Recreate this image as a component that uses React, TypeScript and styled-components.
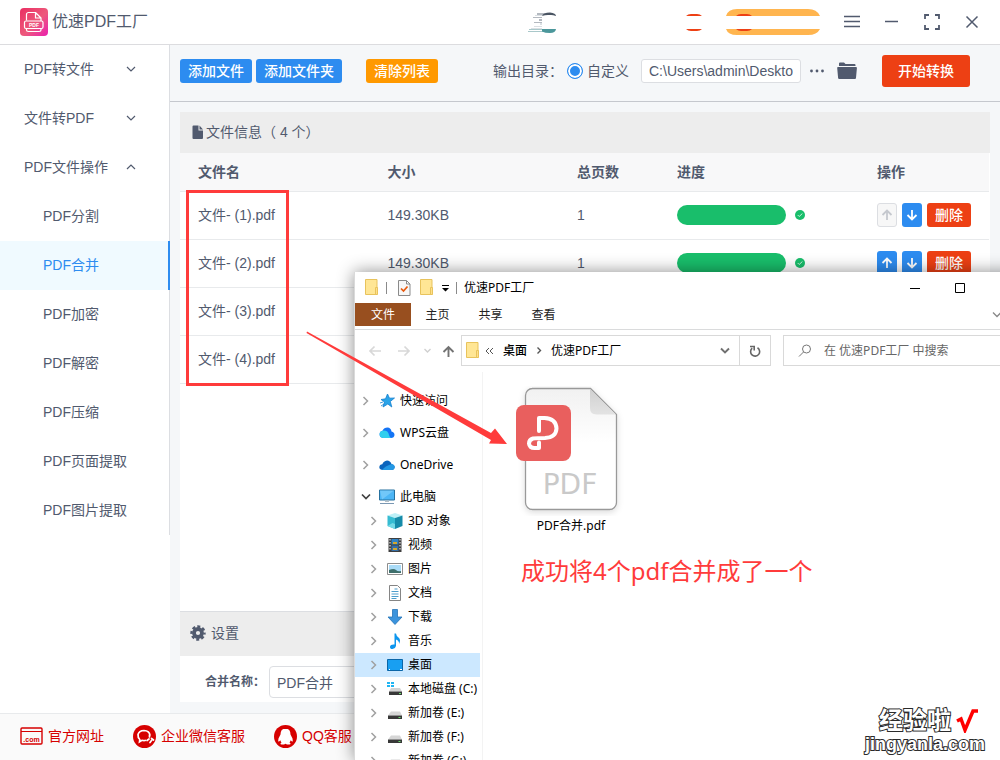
import React from 'react';
import styled, { createGlobalStyle, css } from 'styled-components';

const ink = '#515a6e';
const blue = '#2d8cf0';
const red = '#ed4014';
const line = '#e8eaec';
const mark = '#ff3b3b';
const uiFont = '"Liberation Sans", "Noto Sans CJK SC", sans-serif';
const shellFont = '"Noto Sans", "Noto Sans CJK SC", sans-serif';

const GlobalStyle = createGlobalStyle`
  *, *::before, *::after { box-sizing: border-box; }
  body { margin: 0; background: #fff; color: ${ink}; font: 14px/20px ${uiFont}; }
  button, input { font: inherit; color: inherit; margin: 0; padding: 0; border: 0; background: none; }
  button { cursor: pointer; white-space: nowrap; }
  a { color: inherit; text-decoration: none; }
  ul { list-style: none; margin: 0; padding: 0; }
  svg { display: block; flex: none; }
`;

/* ---------- converter window ---------- */

const Page = styled.div`
  position: relative;
  display: flex;
  flex-direction: column;
  min-height: 100vh;
  overflow: hidden;
`;

const Header = styled.header`
  display: flex;
  align-items: center;
  height: 45px;
  padding: 0 20px;
  border-bottom: 1px solid #dcdcdf;
  background: #fff;
`;

const Brand = styled.h1`
  display: flex;
  align-items: center;
  gap: 4px;
  margin: 0 auto 0 0;
  font-size: 16px;
  line-height: 24px;
  font-weight: 400;
`;

const Promo = styled.div`
  display: flex;
  align-items: center;
  margin-right: 24px;
`;

const WindowButtons = styled.div`
  display: flex;
  align-items: center;
  gap: 24px;
`;

const IconButton = styled.button`
  display: flex;
  align-items: center;
  justify-content: center;
  min-width: 16px;
  height: 16px;
`;

const Body = styled.div`
  display: flex;
  flex: 1;
`;

const Sidebar = styled.nav`
  width: 170px;
  flex: none;
`;

const Menu = styled.ul`
  border-right: 1px solid #dcdee2;
`;

const MenuItem = styled.a<{ $level?: number; $active?: boolean }>`
  display: flex;
  align-items: center;
  justify-content: space-between;
  height: 49px;
  padding: 0 33px 2px ${p => (p.$level === 2 ? 43 : 24)}px;
  ${p => p.$active && css`
    margin-right: -1px;
    color: ${blue};
    background: #f0faff;
    border-right: 2px solid ${blue};
  `}
`;

const Main = styled.main`
  display: flex;
  flex: 1;
  flex-direction: column;
  min-width: 0;
  background: #f5f7f9;
`;

const Toolbar = styled.div`
  display: flex;
  align-items: center;
  height: 57px;
  padding: 0 30px 4px 10px;
  border-bottom: 1px solid #c5c8ce;
`;

const ButtonGroup = styled.div<{ $gap: number }>`
  display: flex;
  align-items: center;
  gap: ${p => p.$gap}px;
`;

const PathTools = styled(ButtonGroup)`
  margin: 0 25px 0 8px;
`;

const tones = { primary: blue, warning: '#ff9900', danger: red };

const Button = styled.button<{ $tone: keyof typeof tones; $large?: boolean }>`
  height: ${p => (p.$large ? 32 : 24)}px;
  padding: 0 ${p => (p.$large ? 16 : 8)}px;
  border-radius: 3px;
  color: #fff;
  font-weight: 500;
  background: ${p => tones[p.$tone]};
`;

const Output = styled.div`
  display: flex;
  align-items: center;
  margin-left: auto;
`;

const RadioLabel = styled.label`
  display: flex;
  align-items: center;
  gap: 4px;
  margin: 0 12px 0 4px;
`;

const Radio = styled.input`
  appearance: none;
  width: 16px;
  height: 16px;
  border: 1px solid ${blue};
  border-radius: 50%;
  background: ${blue};
  box-shadow: inset 0 0 0 2px #fff;
`;

const PathInput = styled.input`
  width: 160px;
  height: 24px;
  padding: 0 7px;
  border: 1px solid #dcdee2;
  border-radius: 3px;
  background: #fff;
`;

const Panel = styled.section`
  display: flex;
  flex: 1;
  flex-direction: column;
  margin: 10px 10px 11px;
  background: #fff;
`;

const PanelTitle = styled.h2<{ $section?: boolean }>`
  display: flex;
  align-items: center;
  height: ${p => (p.$section ? 45 : 41)}px;
  margin: 0;
  padding: 0 ${p => (p.$section ? 10 : 12)}px 2px;
  gap: ${p => (p.$section ? 5 : 2)}px;
  border-top: ${p => (p.$section ? '1px solid #dcdee2' : '0')};
  font-size: 14px;
  font-weight: 400;
  background: #ededed;
`;

const TableArea = styled.div`
  flex: 1;
  padding-right: 1px;
`;

const Table = styled.table`
  width: 100%;
  table-layout: fixed;
  border-collapse: collapse;
`;

const Th = styled.th<{ $width?: number }>`
  width: ${p => (p.$width ? `${p.$width}px` : 'auto')};
  height: 38px;
  padding: 0 0 0 18px;
  text-align: left;
  font-weight: 700;
  background: #f8f8f9;
  border-bottom: 1px solid ${line};
`;

const Td = styled.td`
  height: 48px;
  padding: 0 0 0 18px;
  border-bottom: 1px solid ${line};
`;

const Progress = styled.div`
  display: flex;
  align-items: center;
  gap: 9px;
`;

const Bar = styled.div`
  width: 109px;
  height: 20px;
  border-radius: 10px;
  background: #19be6b;
`;

const MoveButton = styled.button`
  display: flex;
  align-items: center;
  justify-content: center;
  width: 20px;
  height: 24px;
  border-radius: 3px;
  color: #fff;
  background: ${blue};
  &:disabled {
    color: #c5c8ce;
    background: #f7f7f7;
    border: 1px solid #dcdee2;
  }
`;

const Settings = styled.div`
  display: flex;
  align-items: center;
  gap: 8px;
  height: 46px;
  padding: 6px 25px 0;
`;

const SettingLabel = styled.label`
  font-size: 12px;
  font-weight: 700;
  width: 56px;
  white-space: nowrap;
`;

const NameInput = styled.input`
  width: 200px;
  height: 32px;
  padding: 0 7px;
  border: 1px solid #dcdee2;
  border-radius: 4px;
`;

const Footer = styled.footer`
  display: flex;
  align-items: center;
  gap: 29px;
  height: 47px;
  padding: 0 20px 2px;
  border-top: 1px solid ${line};
  background: #fafafa;
`;

const FooterLink = styled.a`
  display: flex;
  align-items: center;
  gap: 5px;
  color: #d60000;
`;

/* ---------- file explorer window ---------- */

const Explorer = styled.section`
  position: absolute;
  top: 272px;
  right: -27px;
  bottom: 0;
  left: 354px;
  display: flex;
  flex-direction: column;
  overflow: hidden;
  border-left: 1px solid #dadada;
  background: #fff;
  color: #000;
  font: 12px/16px ${shellFont};
  box-shadow: 0 0 16px rgba(0, 0, 0, 0.45);
`;

const TitleBar = styled.div`
  display: flex;
  align-items: center;
  height: 31px;
  padding-left: 10px;
`;

const QuickTools = styled.div`
  display: flex;
  align-items: center;
  flex: 1;
`;

const QuickIcons = styled.div`
  display: flex;
  align-items: center;
  gap: 9px;
`;

const QuickMenu = styled.button`
  display: flex;
  justify-content: center;
  width: 22px;
  padding-top: 2px;
`;

const Divider = styled.span<{ $before: number; $after: number }>`
  width: 1px;
  height: 12px;
  margin: 0 ${p => p.$after}px 0 ${p => p.$before}px;
  background: #8a8a8a;
`;

const CaptionButton = styled.button`
  display: flex;
  align-items: center;
  justify-content: center;
  width: 45px;
  height: 29px;
`;

const Ribbon = styled.div`
  display: flex;
  align-items: flex-start;
  height: 27px;
  padding-right: 25px;
  border-bottom: 1px solid #dadbdc;
`;

const RibbonTab = styled.button<{ $file?: boolean }>`
  width: ${p => (p.$file ? 56 : 53)}px;
  height: 23px;
  padding-top: 1px;
  color: ${p => (p.$file ? '#fff' : '#222')};
  background: ${p => (p.$file ? '#984f1f' : 'transparent')};
`;

const RibbonToggle = styled.button`
  margin: 7px 0 0 auto;
`;

const AddressRow = styled.div`
  display: flex;
  align-items: center;
  padding: 5px 0 0 13px;
`;

const History = styled.div`
  display: flex;
  align-items: center;
  width: 93px;
`;

const HistoryButton = styled.button<{ $gap: number }>`
  margin-right: ${p => p.$gap}px;
`;

const Address = styled.div`
  display: flex;
  align-items: center;
  flex: 1;
  height: 31px;
  padding-left: 4px;
  border: 1px solid #d9d9d9;
`;

const Overflow = styled.svg`
  margin-left: 5px;
`;

const Crumb = styled.button<{ $strong?: boolean }>`
  font-weight: ${p => (p.$strong ? 500 : 400)};
  margin: 0 9px;
`;

const AddressMenu = styled(IconButton)`
  margin: 0 6px 0 auto;
`;

const Refresh = styled.button`
  display: flex;
  align-items: center;
  justify-content: center;
  width: 31px;
  height: 29px;
  border-left: 1px solid #d9d9d9;
`;

const Search = styled.label`
  display: flex;
  align-items: center;
  gap: 12px;
  width: 244px;
  height: 31px;
  margin-left: 12px;
  padding-left: 14px;
  border: 1px solid #d9d9d9;
`;

const SearchInput = styled.input`
  flex: 1;
  min-width: 0;
  &::placeholder { color: #666; opacity: 1; }
`;

const Panes = styled.div`
  display: flex;
  flex: 1;
  min-height: 0;
  padding-top: 6px;
`;

const Tree = styled.ul`
  width: 128px;
  flex: none;
  padding: 17px 2px 0 0;
  border-right: 1px solid #f3f3f3;
`;

const TreeItem = styled.li<{ $child?: boolean; $selected?: boolean; $spaced?: boolean }>`
  display: flex;
  align-items: center;
  gap: ${p => (p.$child ? 10 : 8)}px;
  height: 24px;
  padding-left: ${p => (p.$child ? 14 : 6)}px;
  margin-bottom: ${p => (p.$spaced ? 8 : 0)}px;
  white-space: nowrap;
  background: ${p => (p.$selected ? '#cce8ff' : 'transparent')};
`;

const TreeLabel = styled.a`
  display: flex;
  align-items: center;
  gap: 5px;
`;

const Files = styled.div`
  flex: 1;
  padding: 14px 0 0 32px;
`;

const FileTile = styled.figure`
  display: flex;
  flex-direction: column;
  align-items: center;
  gap: 2px;
  width: 112px;
  margin: 0;
`;

const IconWord = styled.text`
  font: 28px "DejaVu Sans", sans-serif;
  fill: #c9c9c9;
`;

/* ---------- callouts drawn over the windows ---------- */

const NameFrame = styled.div`
  position: absolute;
  top: 190px;
  left: 186px;
  width: 103px;
  height: 196px;
  border: 3px solid ${mark};
  pointer-events: none;
`;

const Pointer = styled.svg`
  position: absolute;
  top: 330px;
  left: 304px;
  pointer-events: none;
`;

const Note = styled.p`
  position: absolute;
  top: 553px;
  left: 521px;
  margin: 0;
  color: ${mark};
  font: 24px/36px ${shellFont};
  white-space: nowrap;
`;

const Watermark = styled.div`
  position: absolute;
  right: 15px;
  bottom: 5px;
  display: flex;
  flex-direction: column;
  align-items: center;
  color: #fff;
  font: 700 18px/22px ${uiFont};
  -webkit-text-stroke: 2px #2b2b2b;
  paint-order: stroke fill;
`;

const WatermarkTop = styled.div`
  display: flex;
  align-items: center;
  gap: 5px;
  margin-left: 8px;
  font-size: 24px;
  line-height: 24px;
`;

/* ---------- drawings ---------- */

const Stroke = ({ d, w = 16, h = 16, color = 'currentColor', sw = 1.5 }: {
  d: string; w?: number; h?: number; color?: string; sw?: number;
}) => (
  <svg width={w} height={h} viewBox={`0 0 ${w} ${h}`} fill="none" stroke={color} strokeWidth={sw} aria-hidden="true">
    <path d={d} />
  </svg>
);

const Logo = () => (
  <svg width="28" height="28" viewBox="0 0 28 28" fill="none" aria-hidden="true">
    <defs>
      <linearGradient id="logo" x1="0" y1="0" x2="1" y2="1">
        <stop offset="0" stopColor="#ea2d62" /><stop offset=".55" stopColor="#ed5a7c" /><stop offset="1" stopColor="#ea1fb0" />
      </linearGradient>
    </defs>
    <rect width="28" height="28" rx="4" fill="url(#logo)" />
    <g stroke="#fff" strokeWidth="1.2" strokeLinejoin="round">
      <path d="M6.500 12.500V6.500a2 2 0 0 1 2-2h7l5.500 5.500v3M15.500 4.500v5.500H21" />
      <rect x="4.500" y="13" width="18.500" height="7.500" rx="1.500" />
      <path d="M6.500 20.500v1.500q0 1.500 2 1.500h10.500q2 0 2-1.500v-1.500" />
    </g>
    <text x="14" y="19" textAnchor="middle" fontFamily="Liberation Sans" fontWeight="700" fontSize="5" fill="#fff">PDF</text>
  </svg>
);

const PromoArt = () => (
  <svg width="292" height="28" viewBox="0 0 292 28" aria-hidden="true">
    <path d="M9 5h9v2H9zM5 9h9v1H5zM11 11h3v2h-3zM6 14h8v1H6z" fill="#b4b9c0" />
    <path d="M7 7h7v1H7zM12 15h2v2h-2zM6 18h8v1H6zM3 20h11v1H3z" fill="#dbe0e4" />
    <path d="M14 8q1-3.500 8-3.500 6 .5 6 3.500-4-1.500-6-1-4-.5-8 1z" fill="#4a5563" />
    <path d="M1 21h13v1H1zM0 23h16v1H0z" fill="#a9c8ca" />
    <path d="M14 21h14q-.5 4-6 4-5 0-8-1.500z" fill="#4b979b" />
    <path d="M158 8q2-2 5-2h6q3 0 5 2zM158 21h16q-2 2-5 2h-6q-3 0-5-2z" fill={red} />
    <path d="M198 8q2-7 11-7h71q9 0 12 7zM198 21h94q-3 6-12 6h-71q-9 0-11-6z" fill="#ffb54f" />
    <path d="M208 8q2-2 5-2h6q3 0 5 2zM208 21h16q-2 2-5 2h-6q-3 0-5-2z" fill={red} />
  </svg>
);

const OpenFolder = () => (
  <svg width="20" height="18" viewBox="0 0 20 18" fill={ink} aria-hidden="true">
    <path d="M2 4V1.500Q2 .5 3 .5h4l1.500 1.500h9q1 0 1 1V4zM1 5h18q1 0 .9 1l-.9 10q-.1 1-1 1H2.200q-1 0-1.100-1L.2 6Q.1 5 1 5z" />
  </svg>
);

const FileGlyph = () => (
  <svg width="12" height="14" viewBox="0 0 12 14" aria-hidden="true">
    <path d="M1.500.5h5v5h4.500V13q0 1-1 1H1.500q-1 0-1-1V1.500q0-1 1-1z" fill={ink} />
    <path d="M7.500.5 11 4.500H7.500z" fill={ink} />
  </svg>
);

const Gear = () => (
  <svg width="16" height="16" viewBox="0 0 16 16" fill="none" stroke={ink} aria-hidden="true">
    <circle cx="8" cy="8" r="4" strokeWidth="3.800" />
    <circle cx="8" cy="8" r="6.500" strokeWidth="2.400" strokeDasharray="3 2.105" strokeDashoffset="1.500" />
  </svg>
);

const Done = () => (
  <svg width="10" height="10" viewBox="0 0 10 10" fill="none" aria-hidden="true">
    <circle cx="5" cy="5" r="5" fill="#19be6b" /><path d="m2.700 5 1.500 1.500 3.200-3" stroke="#c9f2dc" />
  </svg>
);

const SiteIcon = () => (
  <svg width="23" height="18" viewBox="0 0 23 18" fill="none" stroke="#d60000" aria-hidden="true">
    <rect x="1" y="1" width="21" height="16" rx="1" strokeWidth="1.400" /><path d="M1 4.500h21" />
    <text x="11.500" y="14.500" textAnchor="middle" fontFamily="Liberation Sans" fontWeight="700" fontSize="7" fill="#d60000" stroke="none">.com</text>
  </svg>
);

const WeComIcon = () => (
  <svg width="23" height="23" viewBox="0 0 23 23" fill="none" aria-hidden="true">
    <circle cx="11.500" cy="11.500" r="11.500" fill="#d60000" />
    <path d="M13 15.300q-2 .6-4 0L6.500 16.800l.3-2.300Q4.700 12.500 5 9.500q1-3.800 6-4 5.500.3 6 5" stroke="#fff" strokeWidth="1.700" />
    <path d="M16.500 10v2M14 15.500l2-1.500M17 17.500l1.500-2M18.500 13.500l2 1.500" stroke="#fff" strokeWidth="1.700" strokeLinecap="round" />
  </svg>
);

const QQIcon = () => (
  <svg width="23" height="23" viewBox="0 0 23 23" aria-hidden="true">
    <circle cx="11.500" cy="11.500" r="11.500" fill="#d60000" />
    <path fill="#fff" d="M11.500 3.500q-5 0-5 6l-2 4q-.7 3 .3 3.300l1.500-1.500q.4 1.500 1.200 2.200-1.800 1-.8 1.700 2.300 1 4.800-.5 2.500 1.500 4.800.5 1-.7-.8-1.700.8-.7 1.200-2.200l1.500 1.500q1-.3.3-3.300l-2-4q0-6-5-6z" />
  </svg>
);

const ShellFolder = () => (
  <svg width="14" height="17" viewBox="0 0 14 17" aria-hidden="true">
    <path d="M.5.500h11.500v15H.5z" fill="#ffe695" stroke="#e8c35c" />
    <path d="M10.500 8.500h2v7h-2z" fill="#ffe08a" stroke="#e8c35c" />
  </svg>
);

const ShellDoc = () => (
  <svg width="13" height="16" viewBox="0 0 13 16" fill="none" aria-hidden="true">
    <path d="M.5.500h8l3.500 3.500v11.500H.5zM8.500.5V4H12" fill="#f7f7f7" stroke="#8a8a8a" />
    <path d="m3 8.500 2.500 2.500 4-4.500" stroke="#e8590c" strokeWidth="1.700" />
  </svg>
);

const glyphs: Record<string, React.ReactNode> = {
  star: <path d="m8.500 1 2 4.200 5-.2-4.200 3.500 1.500 5.500-4-3L4 14l1.500-5L2 6.500l4.500-.7zM1 10l3-1M2 13l3-2" fill="#2aa4e8" stroke="#1680cf" strokeWidth=".8" />,
  wps: <><path d="M4 13a3.700 3.700 0 0 1-.5-7.300Q5 2.500 8.500 2.500q3.500.3 4 4Q15.500 7 15.500 10q-.3 3-3.500 3z" fill="#1474f5" /><path d="M4 13a3.700 3.700 0 0 1-.5-7.300Q9 5 10 10q.5 2 2 3z" fill="#31cfee" /></>,
  onedrive: <><path d="M4 13Q.5 13 .3 10.300q.2-2.800 3-3Q4.500 4 8 3.500q3.300 0 4.500 3.500 3 .5 3.200 3-.2 3-3.200 3z" fill="#0a64bd" /><path d="M3 13q3-4 9.500-6 3 .5 3.200 3-.2 3-3.200 3z" fill="#2398e4" /></>,
  pc: <><path d="M.5 1h15v10H.5z" fill="#4cb5f5" stroke="#27719f" /><path d="m1 1.500 14 0L3 10.500z" fill="#8ad4fc" opacity=".6" /><path d="M6 11.500h4v1.500H6z" fill="#b5c0c8" /><path d="M1 14h14v1H1z" fill="#7b98b3" /></>,
  cube: <><path d="m8 0 7.500 2.500L8 5 .5 2.500z" fill="#bdf0f7" /><path d="M.5 2.500 8 5v11L.5 13z" fill="#36bcd2" /><path d="M15.500 2.500 8 5v11l7.500-3z" fill="#168ba9" /><path d="m.5 13 5-3 2.500 1v5z" fill="#74d9e6" /></>,
  video: <><path d="M1.500 1h13v14h-13z" fill="#3f3f3f" /><path d="M4.500 2h7v5.500h-7z" fill="#2f82c5" /><path d="M4.500 8.500h7V14h-7z" fill="#356fa8" /><path d="M6 5h4v2H6zM6 11h4v2H6z" fill="#d4a72c" /><path d="M3 2v12M13 2v12" stroke="#fff" strokeDasharray="1.500 1.500" /></>,
  image: <><path d="M.5 2.500h15v11H.5z" fill="#fff" stroke="#8d8d8d" /><path d="M2 4h12v8H2z" fill="#a9dbf7" /><path d="M2 9q5-2 7 0t5 1v2H2z" fill="#3f6f6c" /></>,
  doc: <><path d="M2.500.500h8l3 3v12h-11z" fill="#fff" stroke="#858585" /><path d="M4.500 6.500h7M4.500 9h7M4.500 11.500h7M4.500 13.500h5M7.500 4h3" stroke="#4c9dcc" /></>,
  download: <path d="M5.500.5h5v7.500h4.500L8 15.500 1 8h4.500z" fill="#3a93dd" stroke="#2573b8" strokeWidth=".8" />,
  music: <path d="M7.500.500h1.500q.3 2.500 2.500 4 2.800 2.500.5 6.500.5-3-3-4.500V13q-.5 2.700-3.500 3-2.700 0-2.500-2.300.5-2.600 4.500-2.200z" fill="#0d96ee" />,
  desktop: <><path d="M.5 2.500h15v11H.5z" fill="#189ff2" stroke="#0a66a8" /><path d="M2 12.500h1M13 12.500h2" stroke="#fff" /></>,
  system: <><path d="M0 1h3v2H0zM4 1h3v2H4zM0 4h3v2H0zM4 4h3v2H4z" fill="#20b5f3" /><path d="M4 7h9l2 3.500H2z" fill="#d2d2d2" /><path d="M2 10.500h13V14H2z" fill="#383838" /><path d="M12 12.500h2" stroke="#69e06c" /></>,
  drive: <><path d="M4 6.500h9l2 4H1z" fill="#d6d6d6" /><path d="M1 10.500h14V14H1z" fill="#383838" /><path d="M11.500 12.500h2" stroke="#69e06c" /></>,
};

const Glyph = ({ name }: { name: string }) => (
  <svg width="16" height="16" viewBox="0 0 16 16" aria-hidden="true">{glyphs[name]}</svg>
);

const PdfFile = () => (
  <svg width="112" height="130" viewBox="0 0 112 130" fill="none" aria-hidden="true">
    <defs>
      <linearGradient id="sheet" x1="0" y1="0" x2="0" y2="1">
        <stop offset="0" stopColor="#f1f1f1" /><stop offset=".45" stopColor="#fff" />
      </linearGradient>
      <linearGradient id="fold" x1="0" y1="0" x2="0" y2="1">
        <stop offset="0" stopColor="#d0d0d0" /><stop offset="1" stopColor="#e3e3e3" />
      </linearGradient>
      <filter id="soft" x="-20%" y="-20%" width="140%" height="140%">
        <feDropShadow dx="0" dy="2" stdDeviation="3" floodColor="#000" floodOpacity=".14" />
      </filter>
    </defs>
    <path filter="url(#soft)" d="M17 2.500h58.500L101.500 28.500v88a7 7 0 0 1-7 7H17.500a7 7 0 0 1-7-7V9.500a7 7 0 0 1 7-7z" fill="url(#sheet)" stroke="#999" strokeWidth="1.300" />
    <path d="M75 3v19q0 6.500 6.500 6.500h19.500z" fill="url(#fold)" />
    <rect x="1" y="19" width="55" height="56" rx="8" fill="#e95f5e" />
    <path d="M24 45V32h5.500q11.500.5 12 10.500-.5 9-11.500 9.500-8 0-12 .5-4 1.200-4 5 .5 4.500 5.500 4.500h4.500V56.500" stroke="#fff" strokeWidth="4" strokeLinejoin="round" strokeLinecap="round" />
    <IconWord x="55" y="108" textAnchor="middle">PDF</IconWord>
  </svg>
);

/* ---------- data ---------- */

const groups = [
  { label: 'PDF转文件', open: false },
  { label: '文件转PDF', open: false },
  { label: 'PDF文件操作', open: true },
];
const operations = ['PDF分割', 'PDF合并', 'PDF加密', 'PDF解密', 'PDF压缩', 'PDF页面提取', 'PDF图片提取'];
const files = [1, 2, 3, 4].map(n => ({ name: `文件- (${n}).pdf`, size: '149.30KB', pages: 1 }));

const roots = [
  { label: '快速访问', icon: 'star' },
  { label: 'WPS云盘', icon: 'wps' },
  { label: 'OneDrive', icon: 'onedrive' },
  { label: '此电脑', icon: 'pc', open: true },
];
const places = [
  { label: '3D 对象', icon: 'cube' },
  { label: '视频', icon: 'video' },
  { label: '图片', icon: 'image' },
  { label: '文档', icon: 'doc' },
  { label: '下载', icon: 'download' },
  { label: '音乐', icon: 'music' },
  { label: '桌面', icon: 'desktop' },
  { label: '本地磁盘 (C:)', icon: 'system' },
  { label: '新加卷 (E:)', icon: 'drive' },
  { label: '新加卷 (F:)', icon: 'drive' },
  { label: '新加卷 (G:)', icon: 'drive' },
];

const arrowRight = 'M2.500 1 6.500 5 2.500 9';
const arrowDown = 'M1 2.500 5 6.500 9 2.500';

function ExplorerWindow() {
  return (
    <Explorer aria-label="优速PDF工厂">
      <TitleBar>
        <QuickTools>
          <ShellFolder />
          <Divider $before={7} $after={11} />
          <QuickIcons><ShellDoc /><ShellFolder /></QuickIcons>
          <QuickMenu aria-label="自定义快速访问工具栏">
            <svg width="7" height="7" viewBox="0 0 7 7"><path d="M0 0h7v1H0zM0 3h7L3.500 6.500z" fill="#000" /></svg>
          </QuickMenu>
          <Divider $before={0} $after={7} />
          <span>优速PDF工厂</span>
        </QuickTools>
        <CaptionButton aria-label="最小化"><Stroke d="M0 5.500h10" w={10} h={10} sw={1} /></CaptionButton>
        <CaptionButton aria-label="最大化"><Stroke d="M.5.500h9v9h-9z" w={10} h={10} sw={1} /></CaptionButton>
        <CaptionButton aria-label="关闭"><Stroke d="M0 0l10 10M10 0 0 10" w={10} h={10} sw={1} /></CaptionButton>
      </TitleBar>
      <Ribbon>
        <RibbonTab $file>文件</RibbonTab>
        <RibbonTab>主页</RibbonTab>
        <RibbonTab>共享</RibbonTab>
        <RibbonTab>查看</RibbonTab>
        <RibbonToggle aria-label="展开功能区">
          <Stroke d={arrowDown} w={10} h={10} color="#888" sw={1.3} />
        </RibbonToggle>
      </Ribbon>
      <AddressRow>
        <History>
          <HistoryButton $gap={17} aria-label="后退"><Stroke d="M13 6H2M6.500 1.500 2 6l4.500 4.500" w={13} h={12} color="#d8d8d8" sw={1.7} /></HistoryButton>
          <HistoryButton $gap={13} aria-label="前进"><Stroke d="M0 6h11M6.500 1.500 11 6l-4.500 4.500" w={13} h={12} color="#d8d8d8" sw={1.7} /></HistoryButton>
          <HistoryButton $gap={11} aria-label="最近位置"><Stroke d="M.5 2 3.500 5l3-3" w={7} h={7} color="#d0d0d0" sw={1.4} /></HistoryButton>
          <HistoryButton $gap={0} aria-label="上移"><Stroke d="M6.500 12V2M1.500 7l5-5 5 5" w={13} h={12} color="#737373" sw={1.9} /></HistoryButton>
        </History>
        <Address>
          <ShellFolder />
          <Overflow width="9" height="8" viewBox="0 0 9 8" fill="none" stroke="#555"><path d="M4 1 1 4l3 3M8 1 5 4l3 3" /></Overflow>
          <Crumb $strong>桌面</Crumb>
          <Stroke d="M1.500 1.500 4.500 4.500l-3 3" w={6} h={9} color="#555" sw={1.4} />
          <Crumb>优速PDF工厂</Crumb>
          <AddressMenu aria-label="历史地址">
            <Stroke d={arrowDown} w={10} h={10} color="#707070" sw={1.9} />
          </AddressMenu>
          <Refresh aria-label="刷新">
            <Stroke d="M8.500 2.800A4.500 4.500 0 1 1 3.200 3.200M1 1.500h4.200V5.500" w={12} h={12} color="#666" sw={1.6} />
          </Refresh>
        </Address>
        <Search>
          <svg width="14" height="14" viewBox="0 0 14 14" fill="none" stroke="#777"><circle cx="8.500" cy="5" r="4" /><path d="M5.500 8 1 12.500" /></svg>
          <SearchInput type="search" aria-label="搜索" placeholder="在 优速PDF工厂 中搜索" />
        </Search>
      </AddressRow>
      <Panes>
        <Tree>
          {roots.map(r => (
            <TreeItem key={r.label} $spaced={!r.open}>
              {r.open
                ? <Stroke d={arrowDown} w={10} h={10} color="#404040" sw={1.7} />
                : <Stroke d={arrowRight} w={10} h={10} color="#a0a0a0" sw={1.5} />}
              <TreeLabel href="#"><Glyph name={r.icon} />{r.label}</TreeLabel>
            </TreeItem>
          ))}
          {places.map(p => (
            <TreeItem key={p.label} $child $selected={p.label === '桌面'}>
              <Stroke d={arrowRight} w={8} h={10} color="#a0a0a0" sw={1.5} />
              <TreeLabel href="#"><Glyph name={p.icon} />{p.label}</TreeLabel>
            </TreeItem>
          ))}
        </Tree>
        <Files>
          <FileTile>
            <PdfFile />
            <figcaption>PDF合并.pdf</figcaption>
          </FileTile>
        </Files>
      </Panes>
    </Explorer>
  );
}

export default function App() {
  return (
    <Page>
      <GlobalStyle />
      <Header>
        <Brand><Logo />优速PDF工厂</Brand>
        <Promo><PromoArt /></Promo>
        <WindowButtons>
          <IconButton aria-label="菜单"><Stroke d="M0 2.500h16M0 7.500h16M0 12.500h16" /></IconButton>
          <IconButton aria-label="最小化"><Stroke d="M1 7.500h13" /></IconButton>
          <IconButton aria-label="最大化"><Stroke d="M1 5V1h4M11 1h4v4M15 11v4h-4M5 15H1v-4" sw={1.8} /></IconButton>
          <IconButton aria-label="关闭"><Stroke d="m2.500 2.500 11 11M13.500 2.500l-11 11" /></IconButton>
        </WindowButtons>
      </Header>
      <Body>
        <Sidebar>
          <Menu>
            {groups.map(g => (
              <li key={g.label}>
                <MenuItem href="#">
                  {g.label}
                  <Stroke d={g.open ? 'M1 7 5 3l4 4' : 'M1 3l4 4 4-4'} w={10} h={10} sw={1.2} />
                </MenuItem>
              </li>
            ))}
            {operations.map(o => (
              <li key={o}><MenuItem href="#" $level={2} $active={o === 'PDF合并'}>{o}</MenuItem></li>
            ))}
          </Menu>
        </Sidebar>
        <Main>
          <Toolbar>
            <ButtonGroup $gap={24}>
              <ButtonGroup $gap={4}>
                <Button $tone="primary">添加文件</Button>
                <Button $tone="primary">添加文件夹</Button>
              </ButtonGroup>
              <Button $tone="warning">清除列表</Button>
            </ButtonGroup>
            <Output>
              <span>输出目录：</span>
              <RadioLabel><Radio type="radio" name="output" defaultChecked />自定义</RadioLabel>
              <PathInput aria-label="输出目录" defaultValue="C:\Users\admin\Deskto" />
              <PathTools $gap={12}>
                <IconButton aria-label="浏览">
                  <svg width="16" height="16" viewBox="0 0 16 16" fill={ink}><circle cx="2.500" cy="8" r="1.400" /><circle cx="8" cy="8" r="1.400" /><circle cx="13.500" cy="8" r="1.400" /></svg>
                </IconButton>
                <IconButton aria-label="打开文件夹"><OpenFolder /></IconButton>
              </PathTools>
              <Button $tone="danger" $large>开始转换</Button>
            </Output>
          </Toolbar>
          <Panel>
            <PanelTitle><FileGlyph />文件信息（ 4 个）</PanelTitle>
            <TableArea>
              <Table>
                <thead>
                  <tr>
                    <Th>文件名</Th><Th>大小</Th><Th $width={100}>总页数</Th><Th $width={200}>进度</Th><Th $width={130}>操作</Th>
                  </tr>
                </thead>
                <tbody>
                  {files.map((f, i) => (
                    <tr key={f.name}>
                      <Td>{f.name}</Td>
                      <Td>{f.size}</Td>
                      <Td>{f.pages}</Td>
                      <Td><Progress><Bar role="progressbar" aria-label={f.name} aria-valuenow={100} /><Done /></Progress></Td>
                      <Td>
                        <ButtonGroup $gap={5}>
                          <MoveButton disabled={i === 0} aria-label="上移"><Stroke d="M6 11V2M1.500 6 6 1.500 10.500 6" w={12} h={12} sw={1.8} /></MoveButton>
                          <MoveButton disabled={i === files.length - 1} aria-label="下移"><Stroke d="M6 1v9M1.500 6 6 10.500 10.500 6" w={12} h={12} sw={1.8} /></MoveButton>
                          <Button $tone="danger">删除</Button>
                        </ButtonGroup>
                      </Td>
                    </tr>
                  ))}
                </tbody>
              </Table>
            </TableArea>
            <PanelTitle $section><Gear />设置</PanelTitle>
            <Settings>
              <SettingLabel htmlFor="merge-name">合并名称：</SettingLabel>
              <NameInput id="merge-name" defaultValue="PDF合并" />
            </Settings>
          </Panel>
        </Main>
      </Body>
      <Footer>
        <FooterLink href="#"><SiteIcon />官方网址</FooterLink>
        <FooterLink href="#"><WeComIcon />企业微信客服</FooterLink>
        <FooterLink href="#"><QQIcon />QQ客服</FooterLink>
      </Footer>
      <ExplorerWindow />
      <NameFrame />
      <Pointer width="206" height="118" viewBox="0 0 206 118" aria-hidden="true">
        <path d="M3 1.500 187 103l4-4.500 12 15.500-18-.500 2-3.500L2.500 3z" fill={mark} />
      </Pointer>
      <Note>成功将4个pdf合并成了一个</Note>
      <Watermark>
        <WatermarkTop>
          经验啦
          <svg width="23" height="24" viewBox="0 0 23 24" fill="none" stroke="#f00" strokeWidth="3.500" aria-hidden="true"><path d="m1 12 4-2 4 11L17 2h5" /></svg>
        </WatermarkTop>
        <span>jingyanla.com</span>
      </Watermark>
    </Page>
  );
}
